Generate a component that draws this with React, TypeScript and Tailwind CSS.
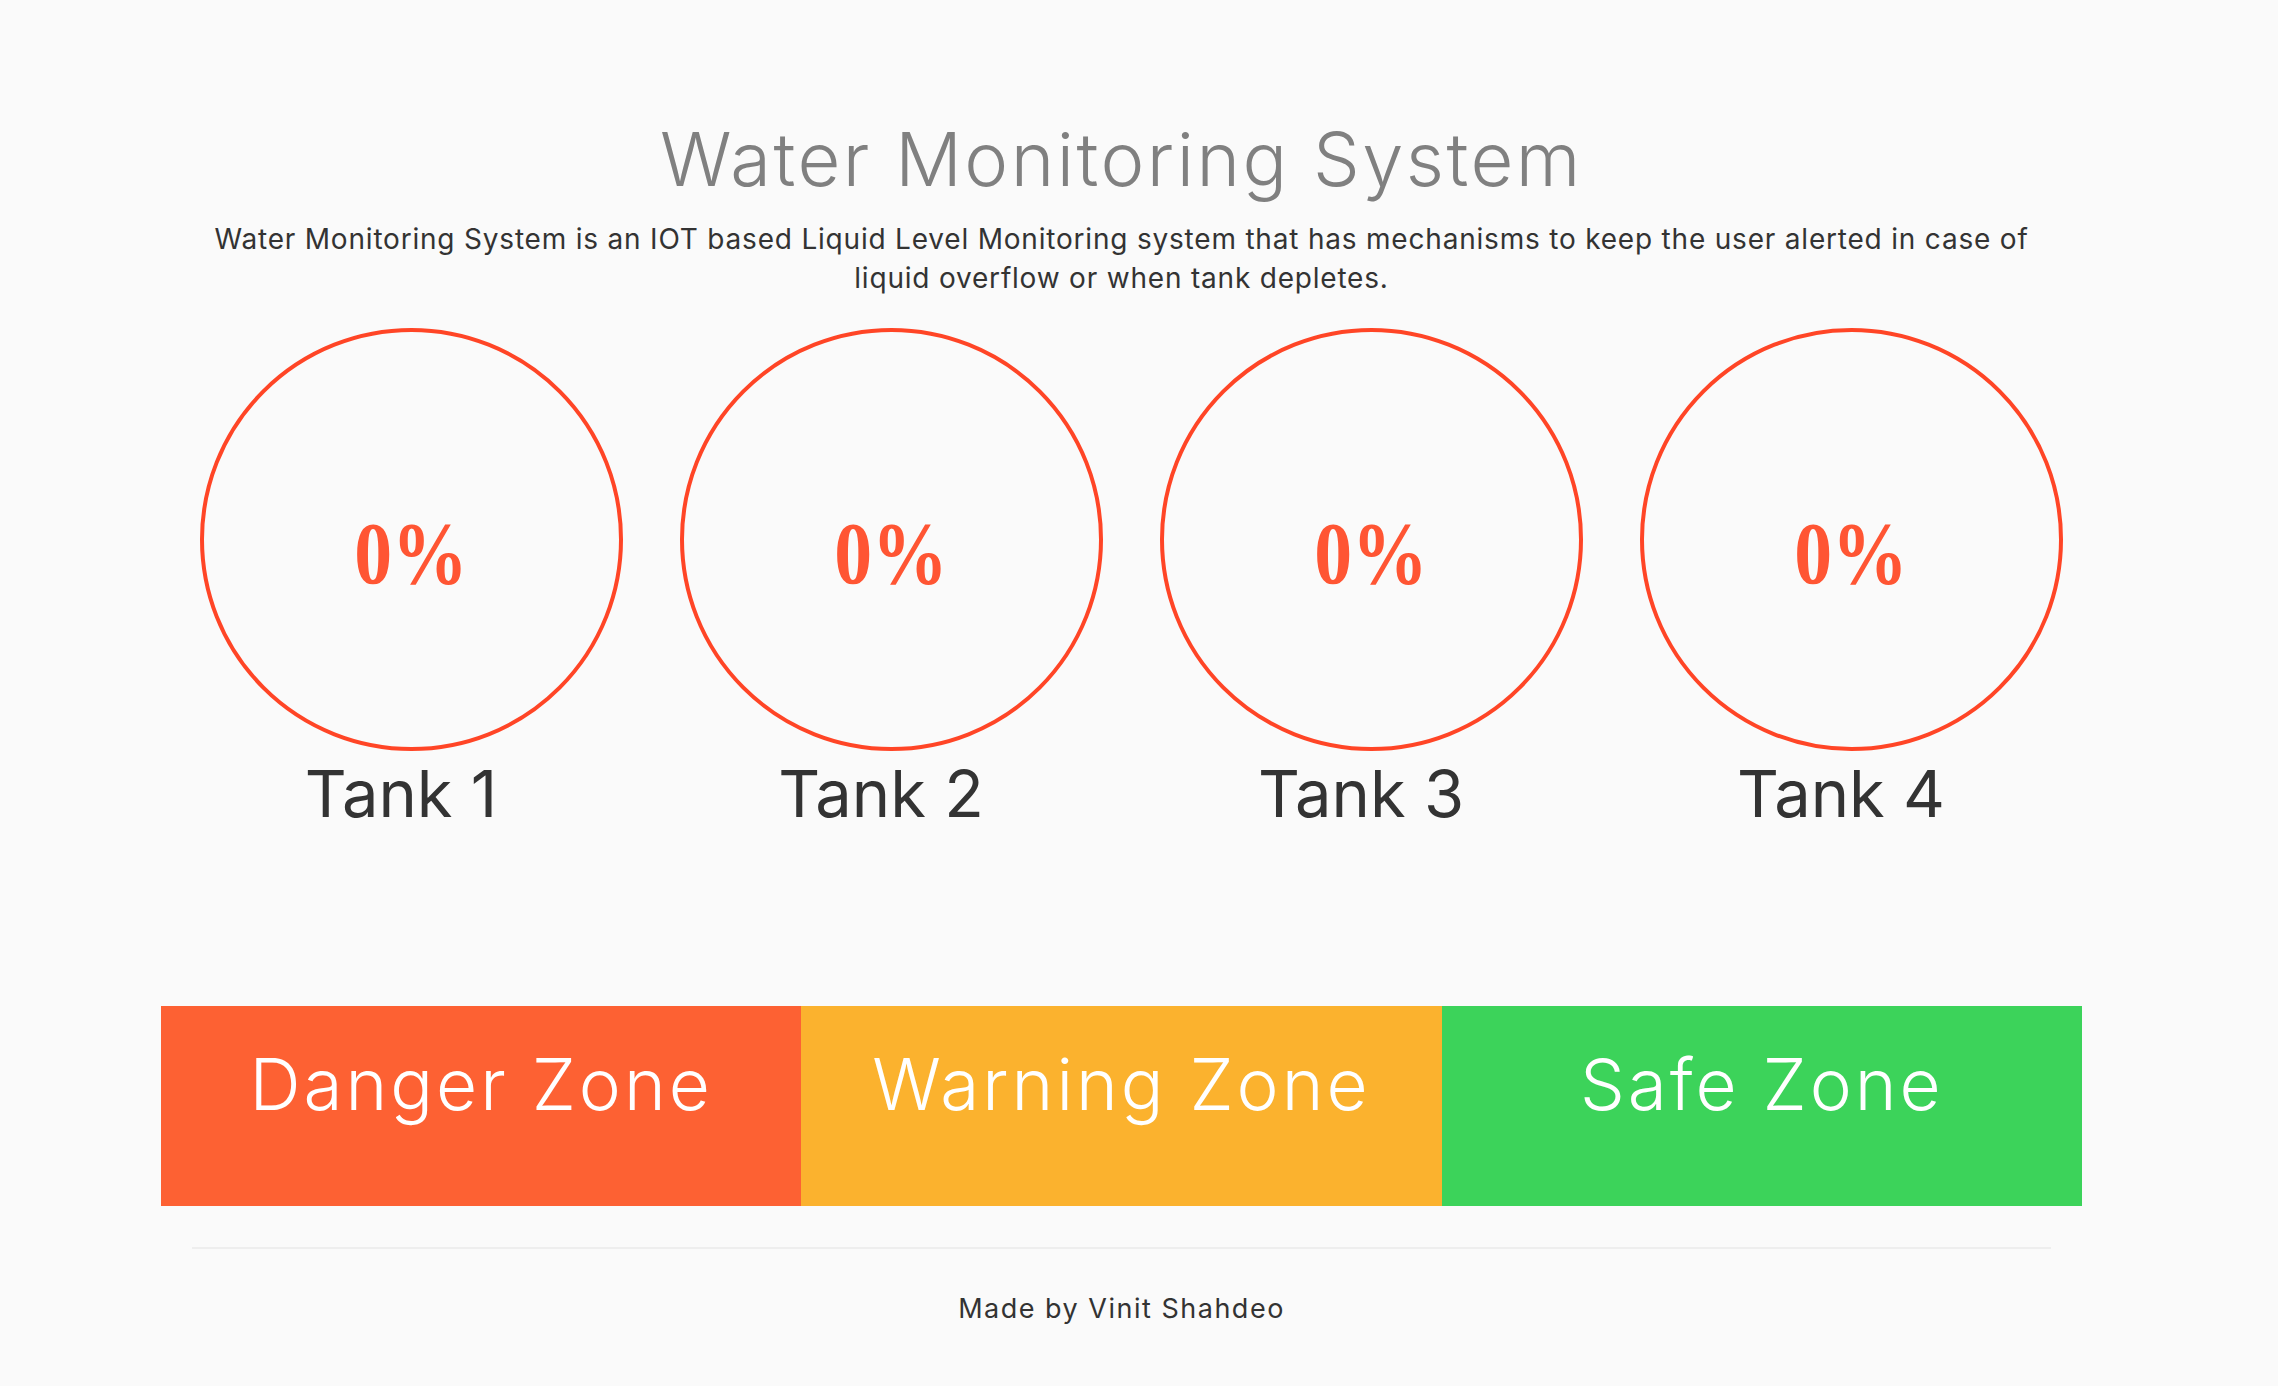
import React from "react";

const tanks = ["Tank 1", "Tank 2", "Tank 3", "Tank 4"];

const zones = [
  { label: "Danger Zone", bg: "bg-[#fd6133]" },
  { label: "Warning Zone", bg: "bg-[#fbb22e]" },
  { label: "Safe Zone", bg: "bg-[#3cd35a]" },
];

const Gauge: React.FC<{ name: string; value: number }> = ({ name, value }) => {
  return (
    <div className="flex flex-col items-center">
      <div className="w-[423px] h-[423px] rounded-full border-[4px] border-[#ff4526] flex items-center justify-center pt-[28px]">
        <span className="font-['Liberation_Serif',serif] font-bold text-[88px] leading-[88px] text-[#ff5533] scale-x-[0.86]">
          {value}%
        </span>
      </div>
      <div className="mt-[4px] pr-[20px] text-[65px] leading-[78px] text-[#333333]">{name}</div>
    </div>
  );
};

const App: React.FC = () => {
  return (
    <div className="min-h-screen bg-[#fafafa] font-['Inter',sans-serif] pb-[60px]">
      <div className="pl-[161px] pr-[196px]">
        <h1 className="pt-[114px] text-center text-[74px] leading-[90px] font-light tracking-[2.5px] text-[#808080]">
          Water Monitoring System
        </h1>
        <p className="mt-[16px] text-center text-[28px] leading-[39px] tracking-[0.8px] text-[#333333]">
          Water Monitoring System is an IOT based Liquid Level Monitoring system that has mechanisms to keep the user alerted in case of
          <br />
          liquid overflow or when tank depletes.
        </p>
      </div>

      <div className="ml-[171px] w-[1920px] mt-[30px] grid grid-cols-4">
        {tanks.map((t) => (
          <Gauge key={t} name={t} value={0} />
        ))}
      </div>

      <div className="pl-[161px] pr-[196px]">
        <div className="mt-[173px] grid grid-cols-3 h-[200px]">
          {zones.map((z) => (
            <div key={z.label} className={`${z.bg} pt-[36px] text-center`}>
              <span className="text-[71px] leading-[84px] font-light tracking-[3px] text-white">{z.label}</span>
            </div>
          ))}
        </div>
        <div className="mx-[31px] mt-[41px] h-[2px] bg-[#eeeeee]" />
        <p className="mt-[42px] text-center text-[27px] leading-[36px] tracking-[1.5px] text-[#333333]">
          Made by Vinit Shahdeo
        </p>
      </div>
    </div>
  );
};

export default App;
